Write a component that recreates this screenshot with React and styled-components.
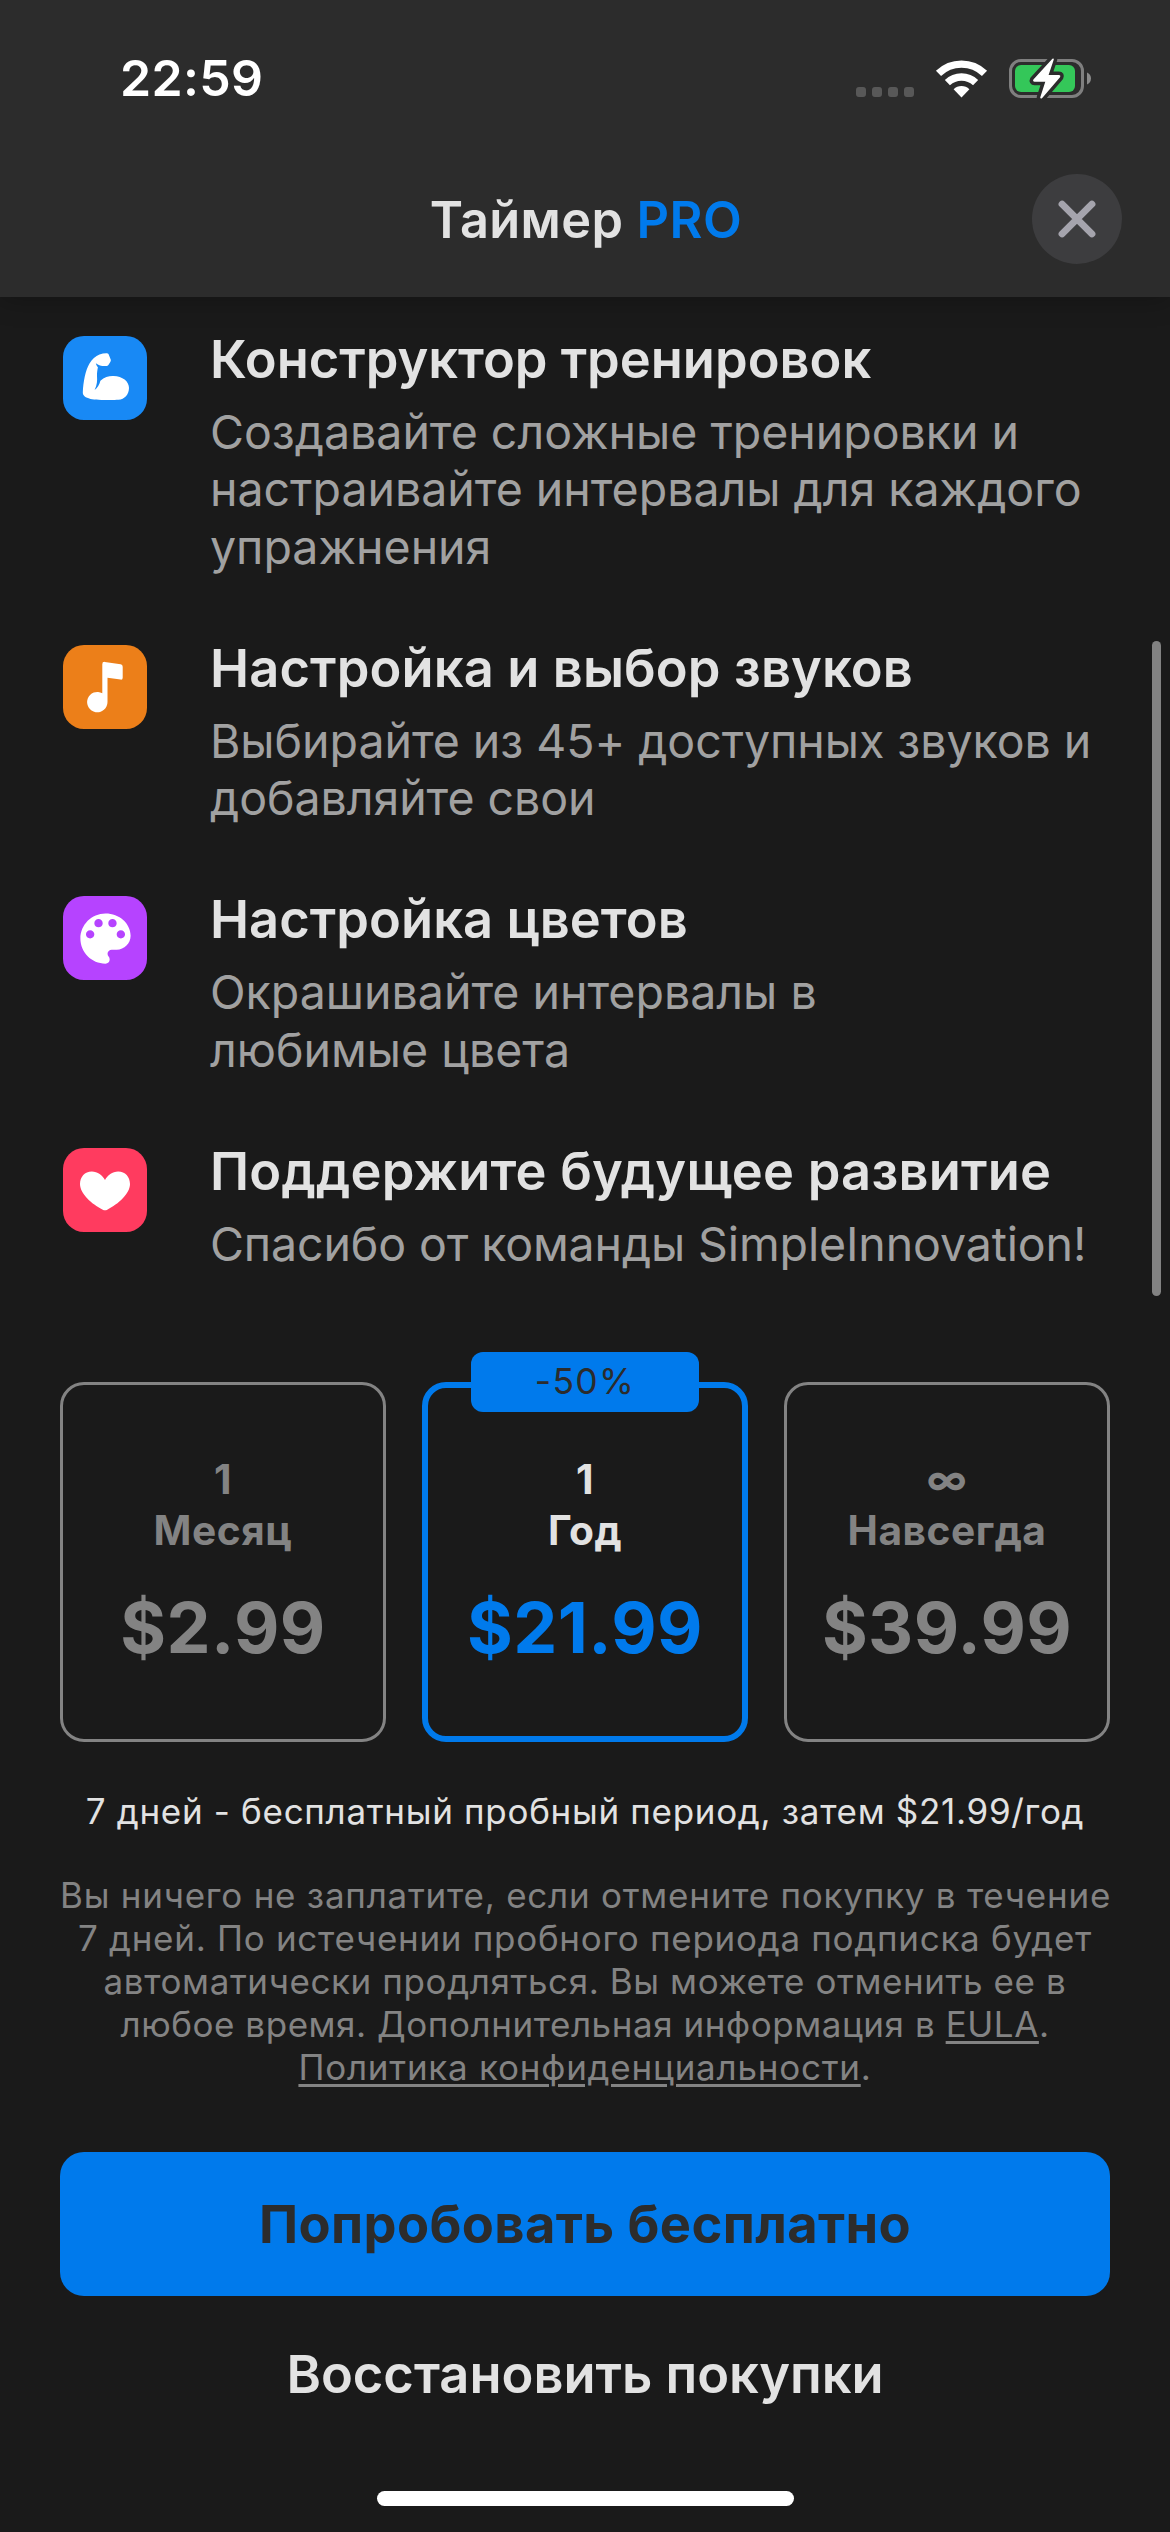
import React from "react";
import styled, { createGlobalStyle } from "styled-components";

const color = {
  bg: "#1a1a1a",
  bar: "#2c2c2c",
  text: "#e2e2e2",
  secondary: "#a1a1a1",
  muted: "#838383",
  accent: "#007aec",
};

const GlobalStyle = createGlobalStyle`
  *, *::before, *::after { box-sizing: border-box; }
  body {
    margin: 0;
    background: ${color.bg};
    font-family: Inter, "Liberation Sans", sans-serif;
    -webkit-font-smoothing: antialiased;
  }
  h1, h2, p { margin: 0; }
  button { border: 0; padding: 0; font-family: inherit; cursor: pointer; }
`;

const Screen = styled.div`
  position: relative;
  display: flex;
  flex-direction: column;
  width: 1170px;
  height: 2532px;
  overflow: hidden;
  background: ${color.bg};
`;

const Header = styled.header`
  flex: none;
  height: 297px;
  background: ${color.bar};
  box-shadow: 0 0 27px rgba(0, 0, 0, 0.3);
`;

const StatusBar = styled.div`
  display: flex;
  align-items: center;
  justify-content: space-between;
  height: 141px;
  padding: 15px 79px 0 120px;
`;

const Clock = styled.span`
  color: #fff;
  font-size: 50px;
  font-weight: 600;
  line-height: 60px;
  letter-spacing: 0.3px;
`;

const StatusIcons = styled.div`
  display: flex;
  align-items: flex-end;
  gap: 22px;
  height: 39px;
`;

const SignalDots = styled.div`
  display: flex;
  gap: 6px;
  margin-bottom: 1px;
`;

const Dot = styled.span`
  width: 10px;
  height: 10px;
  border-radius: 3px;
  background: #585858;
`;

const Glyph = styled.svg`
  display: block;
  flex: none;
  overflow: visible;
`;

const NavBar = styled.div`
  display: grid;
  grid-template-columns: 1fr auto 1fr;
  align-items: center;
  height: 156px;
  padding: 0 48px;
`;

const Title = styled.h1`
  grid-column: 2;
  color: ${color.text};
  font-size: 50.5px;
  font-weight: 600;
  line-height: 60px;
  letter-spacing: 0.4px;
  padding: 2px 0 0 2px;
`;

const Accent = styled.span`
  color: ${color.accent};
`;

const CloseButton = styled.button`
  display: grid;
  place-items: center;
  justify-self: end;
  width: 90px;
  height: 90px;
  border-radius: 50%;
  background: #3d3d3f;
`;

const Content = styled.main`
  display: flex;
  flex-direction: column;
  padding: 30px 60px 0;
`;

const FeatureList = styled.section`
  display: flex;
  flex-direction: column;
  gap: 60px;
  padding-left: 3px;
`;

const Feature = styled.article`
  display: flex;
  gap: 63px;
`;

const Tile = styled.div`
  flex: none;
  display: grid;
  place-items: center;
  width: 84px;
  height: 84px;
  margin-top: 9px;
  border-radius: 21px;
  background: ${(p) => p.$color};
`;

const FeatureTitle = styled.h2`
  color: ${color.text};
  font-size: 52.4px;
  font-weight: 600;
  line-height: 64px;
  letter-spacing: ${(p) => p.$spacing}px;
  white-space: nowrap;
`;

const FeatureText = styled.p`
  margin-top: 13px;
  color: ${color.secondary};
  font-size: 46.5px;
  line-height: 57.3px;
  letter-spacing: ${(p) => p.$spacing}px;
  white-space: pre-line;
  width: 890px;
`;

const Plans = styled.section`
  display: grid;
  grid-template-columns: repeat(3, 1fr);
  gap: 36px;
  margin-top: 109px;
`;

const Plan = styled.article`
  position: relative;
  display: flex;
  flex-direction: column;
  align-items: center;
  height: 360px;
  padding-top: ${(p) => (p.$active ? 66 : 69)}px;
  border: ${(p) => (p.$active ? `6px solid ${color.accent}` : `3px solid ${color.muted}`)};
  border-radius: 24px;
`;

const Badge = styled.span`
  position: absolute;
  top: -36px;
  left: 50%;
  transform: translateX(-50%);
  width: 228px;
  height: 60px;
  border-radius: 12px;
  background: ${color.accent};
  color: ${color.bar};
  font-size: 35.5px;
  line-height: 60px;
  letter-spacing: 1.3px;
  text-align: center;
`;

const Period = styled.p`
  color: ${(p) => (p.$active ? color.text : color.muted)};
  font-size: 40.7px;
  font-weight: 700;
  line-height: 51px;
  letter-spacing: 0.5px;
  text-align: center;
  white-space: pre-line;
`;

const Price = styled.p`
  margin-top: 30px;
  color: ${(p) => (p.$active ? color.accent : color.muted)};
  font-size: 70px;
  font-weight: 700;
  line-height: 84px;
  letter-spacing: 0.4px;
`;

const Trial = styled.p`
  margin-top: 48px;
  color: ${color.text};
  font-size: 35px;
  line-height: 43px;
  letter-spacing: 0.69px;
  text-align: center;
  white-space: nowrap;
`;

const Legal = styled.p`
  margin-top: 41px;
  color: ${color.muted};
  font-size: 35px;
  line-height: 43px;
  text-align: center;
  white-space: nowrap;
`;

const LegalLine = styled.span`
  display: block;
  letter-spacing: ${(p) => p.$spacing}px;
`;

const Link = styled.a`
  text-decoration: underline;
  text-decoration-thickness: 3px;
  text-underline-offset: 4px;
`;

const PrimaryButton = styled.button`
  height: 144px;
  margin-top: 63px;
  border-radius: 24px;
  background: ${color.accent};
  color: ${color.bar};
  font-size: 52.4px;
  font-weight: 700;
  letter-spacing: 0.4px;
`;

const RestoreButton = styled.button`
  height: 156px;
  background: transparent;
  color: ${color.text};
  font-size: 52.4px;
  font-weight: 600;
`;

const HomeIndicator = styled.div`
  align-self: center;
  width: 417px;
  height: 15px;
  margin-top: 39px;
  border-radius: 8px;
  background: #fff;
`;

const ScrollThumb = styled.div`
  position: absolute;
  top: 641px;
  right: 9px;
  width: 9px;
  height: 655px;
  border-radius: 5px;
  background: #828282;
`;

const WifiIcon = () => (
  <Glyph width="51" height="38" viewBox="0 0 51 38">
    <g fill="none" stroke="#fff" strokeWidth="7.4">
      <path d="M2.5 13.4A33.2 33.2 0 0 1 48.5 13.4" />
      <path d="M11.4 22.6A20.4 20.4 0 0 1 39.6 22.6" />
    </g>
    <path d="M25.5 37.4L17.6 29.2a11.4 11.4 0 0 1 15.8 0z" fill="#fff" />
  </Glyph>
);

const BatteryIcon = () => {
  const bolt = "M43.4 -0.2L24.4 20.6Q23.4 22.7 25.6 22.7H36.3L31.2 38.4Q31.4 40.2 33 39.2L51 18.2Q52 15.9 49.8 15.9H39.6L44.8 0.4Q44.8 -1.2 43.4 -0.2Z";
  return (
    <Glyph width="82" height="39" viewBox="0 0 82 39">
      <rect x="1.5" y="1.5" width="72" height="36" rx="10.5" fill="none" stroke="#7f7f7f" strokeWidth="3" />
      <path d="M78 13.5c2.4.8 4 3.200 4 6s-1.600 5.200-4 6z" fill="#8a8a8a" />
      <rect x="6" y="6" width="60" height="27" rx="6" fill="#34c759" />
      <path d={bolt} fill={color.bar} stroke={color.bar} strokeWidth="7" strokeLinejoin="round" />
      <path d={bolt} fill="#fff" />
    </Glyph>
  );
};

const CloseIcon = () => (
  <Glyph width="38" height="38" viewBox="0 0 38 38">
    <path d="M4.100 4.100L33.900 33.900M33.900 4.100L4.100 33.900" stroke="#a5a4ad" strokeWidth="7" strokeLinecap="round" />
  </Glyph>
);

const TileIcon = ({ children }) => (
  <Glyph width="84" height="84" viewBox="0 0 84 84" fill="#fff">
    {children}
  </Glyph>
);

const ArmIcon = () => (
  <TileIcon>
    <path d="M36.500 18.600C39 17.600 41.500 17.200 44 17.300C45 17.400 45.600 18 45.900 19L47.800 23.800C48 24.600 47.800 25.200 47.300 25.900L45.400 29C44.900 29.700 44.300 30 43.500 30C40 30.400 36 29.800 32.800 27.300C33.200 28.800 33.700 30 34.900 31.200C34.400 34 33.900 36.500 34 40C34.300 44.500 34.200 49 31.600 54C34.500 51.800 36.500 48.500 37.400 44.700C41.500 41 46 39.700 50.500 39.900C59.500 40.200 66 45.200 66 52C66 58.500 61.500 63.400 55.500 63.700C49.500 64.200 33 64 27.500 62.900C22.500 61.800 19.800 59.800 19.800 56.600C20.200 46 22.500 34 26.500 27.500C29 23.500 32.500 20.300 36.500 18.600Z" />
  </TileIcon>
);

const NoteIcon = () => (
  <TileIcon>
    <path d="M39.300 19.200Q39.300 16.600 41.800 16.900L57.600 19.300Q59.700 19.700 59.700 21.700V32.800Q59.700 34.900 57.600 34.600L44.500 32.800V57A10.200 10.200 0 1 1 39.300 48.200Z" />
  </TileIcon>
);

const PaletteIcon = () => (
  <Glyph width="67" height="67" viewBox="0 0 24 24" fill="#fff">
    <path d="M12 3c-4.970 0-9 4.030-9 9s4.030 9 9 9c.83 0 1.500-.67 1.500-1.500 0-.39-.15-.74-.39-1.010-.23-.26-.38-.61-.38-.99 0-.83.67-1.500 1.500-1.500H16c2.760 0 5-2.240 5-5 0-4.420-4.030-8-9-8zm-5.500 9c-.83 0-1.500-.67-1.500-1.500S5.670 9 6.500 9 8 9.670 8 10.500 7.330 12 6.500 12zm3-4C8.670 8 8 7.330 8 6.500S8.670 5 9.500 5s1.500.67 1.500 1.500S10.330 8 9.500 8zm5 0c-.83 0-1.500-.67-1.500-1.500S13.670 5 14.500 5s1.500.67 1.500 1.500S15.330 8 14.500 8zm3 4c-.83 0-1.500-.67-1.500-1.500S16.670 9 17.500 9s1.500.67 1.500 1.500-.67 1.500-1.500 1.500z" />
  </Glyph>
);

const HeartIcon = () => (
  <TileIcon>
    <path d="M42 32C39.500 27.200 34.700 23.400 28.800 23.400C21.800 23.400 17 28.800 17 36C17 45.500 28.500 56 39.800 61.700Q42 63 44.200 61.700C55.500 56 67 45.500 67 36C67 28.800 62.200 23.400 55.200 23.400C49.300 23.400 44.500 27.200 42 32Z" />
  </TileIcon>
);

const features = [
  {
    icon: ArmIcon,
    tile: "#1889f5",
    title: "Конструктор тренировок",
    titleSpacing: 0,
    text: "Создавайте сложные тренировки и\nнастраивайте интервалы для каждого\nупражнения",
    textSpacing: -0.02,
  },
  {
    icon: NoteIcon,
    tile: "#ec7f19",
    title: "Настройка и выбор звуков",
    titleSpacing: 0.13,
    text: "Выбирайте из 45+ доступных звуков и\nдобавляйте свои",
    textSpacing: -0.05,
  },
  {
    icon: PaletteIcon,
    tile: "#b643ff",
    title: "Настройка цветов",
    titleSpacing: 0.05,
    text: "Окрашивайте интервалы в\nлюбимые цвета",
    textSpacing: 0,
  },
  {
    icon: HeartIcon,
    tile: "#ff3b5f",
    title: "Поддержите будущее развитие",
    titleSpacing: 0.24,
    text: "Спасибо от команды SimpleInnovation!",
    textSpacing: -0.13,
  },
];

const plans = [
  { period: "1\nМесяц", price: "$2.99" },
  { period: "1\nГод", price: "$21.99", badge: "-50%", active: true },
  { period: "∞\nНавсегда", price: "$39.99" },
];

export default function App() {
  return (
    <>
      <GlobalStyle />
      <Screen>
        <Header>
          <StatusBar>
            <Clock>22:59</Clock>
            <StatusIcons>
              <SignalDots>
                <Dot />
                <Dot />
                <Dot />
                <Dot />
              </SignalDots>
              <WifiIcon />
              <BatteryIcon />
            </StatusIcons>
          </StatusBar>
          <NavBar>
            <Title>
              Таймер <Accent>PRO</Accent>
            </Title>
            <CloseButton aria-label="Закрыть">
              <CloseIcon />
            </CloseButton>
          </NavBar>
        </Header>

        <Content>
          <FeatureList>
            {features.map(({ icon: Icon, ...f }) => (
              <Feature key={f.title}>
                <Tile $color={f.tile}>
                  <Icon />
                </Tile>
                <div>
                  <FeatureTitle $spacing={f.titleSpacing}>{f.title}</FeatureTitle>
                  <FeatureText $spacing={f.textSpacing}>{f.text}</FeatureText>
                </div>
              </Feature>
            ))}
          </FeatureList>

          <Plans>
            {plans.map((p) => (
              <Plan key={p.price} $active={p.active}>
                {p.badge && <Badge>{p.badge}</Badge>}
                <Period $active={p.active}>{p.period}</Period>
                <Price $active={p.active}>{p.price}</Price>
              </Plan>
            ))}
          </Plans>

          <Trial>7 дней - бесплатный пробный период, затем $21.99/год</Trial>
          <Legal>
            <LegalLine $spacing={0.76}>Вы ничего не заплатите, если отмените покупку в течение</LegalLine>
            <LegalLine $spacing={0.71}>7 дней. По истечении пробного периода подписка будет</LegalLine>
            <LegalLine $spacing={0.6}>автоматически продляться. Вы можете отменить ее в</LegalLine>
            <LegalLine $spacing={0.55}>
              любое время. Дополнительная информация в <Link>EULA</Link>.
            </LegalLine>
            <LegalLine $spacing={0.76}>
              <Link>Политика конфиденциальности</Link>.
            </LegalLine>
          </Legal>

          <PrimaryButton>Попробовать бесплатно</PrimaryButton>
          <RestoreButton>Восстановить покупки</RestoreButton>
        </Content>

        <HomeIndicator />
        <ScrollThumb />
      </Screen>
    </>
  );
}
